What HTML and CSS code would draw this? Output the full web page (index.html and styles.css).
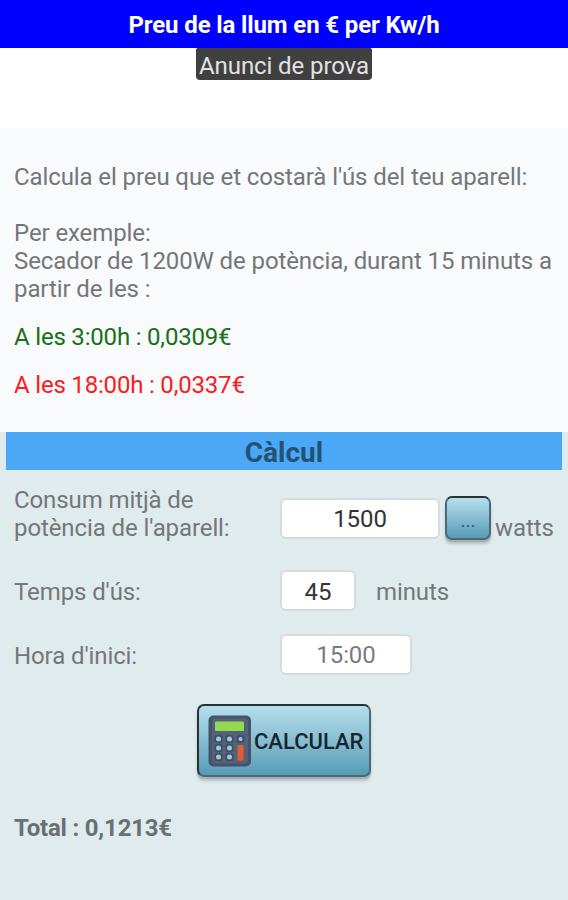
FILE: index.html
```html
<!DOCTYPE html>
<html lang="ca">
<head>
<meta charset="utf-8">
<title>Preu de la llum</title>
<link rel="stylesheet" href="styles.css">
</head>
<body>
<header class="title-bar"><h1>Preu de la llum en € per Kw/h</h1></header>
<div class="ad"><span class="ad-label">Anunci de prova</span></div>
<section class="intro">
  <p class="lead">Calcula el preu que et costarà l'ús del teu aparell:</p>
  <p class="example">Per exemple:<br>Secador de 1200W de potència, durant 15 minuts a<br>partir de les :</p>
  <p class="price cheap">A les 3:00h : 0,0309€</p>
  <p class="price dear">A les 18:00h : 0,0337€</p>
</section>
<main class="calc">
  <h2 class="calc-title">Càlcul</h2>
  <form class="form">
    <div class="row row-power">
      <label class="label" for="power">Consum mitjà de<br>potència de l'aparell:</label>
      <input class="field field-power" id="power" value="1500">
      <button class="button more" type="button">...</button>
      <span class="unit unit-watts">watts</span>
    </div>
    <div class="row row-time">
      <label class="label" for="time">Temps d'ús:</label>
      <input class="field field-time" id="time" value="45">
      <span class="unit unit-minutes">minuts</span>
    </div>
    <div class="row row-hour">
      <label class="label" for="hour">Hora d'inici:</label>
      <input class="field field-hour" id="hour" value="15:00">
    </div>
    <button class="button submit" type="button">
      <svg class="calculator" viewBox="0 0 44 54" width="44" height="54" aria-hidden="true">
        <rect x="0.500" y="1.500" width="42.500" height="51" rx="5" fill="#45546a"/>
        <rect x="4" y="4.500" width="36" height="45" rx="3" fill="#526278"/>
        <rect x="7" y="7.500" width="29" height="9.500" rx="1" fill="#94d952"/>
        <g fill="#3f4f64">
          <rect x="6.500" y="21" width="8" height="8" rx="2"/><rect x="17.500" y="21" width="8" height="8" rx="2"/><rect x="28.500" y="21" width="8" height="8" rx="2"/>
          <rect x="6.500" y="30" width="8" height="8" rx="2"/><rect x="17.500" y="30" width="8" height="8" rx="2"/>
          <rect x="6.500" y="39" width="8" height="8" rx="2"/><rect x="17.500" y="39" width="8" height="8" rx="2"/>
        </g>
        <g fill="#a3c6da">
          <circle cx="10.500" cy="25" r="2.500"/><circle cx="21.500" cy="25" r="2.500"/><circle cx="32.500" cy="25" r="2"/>
          <circle cx="10.500" cy="34" r="2.500"/><circle cx="21.500" cy="34" r="2.500"/>
          <circle cx="10.500" cy="43" r="2.500"/><circle cx="21.500" cy="43" r="2.500"/>
        </g>
        <rect x="29.500" y="31" width="6" height="15.500" rx="1" fill="#e65a31"/>
      </svg>
      <span class="submit-text">CALCULAR</span>
    </button>
  </form>
  <p class="total">Total : 0,1213€</p>
</main>
</body>
</html>
```
FILE: styles.css
```css
* { box-sizing: border-box; }
body {
  margin: 0;
  min-height: 900px;
  display: flex;
  flex-direction: column;
  background: #e0ebed;
  font: 24px/28px Roboto, sans-serif;
  letter-spacing: -0.1px;
  color: #737779;
}
h1, h2, p { margin: 0; }
.title-bar {
  height: 48px;
  padding-top: 11px;
  background: #0000ff;
  color: #fff;
  text-align: center;
}
h1 { font-size: 24px; line-height: 29px; font-weight: 700; letter-spacing: -0.13px; }
.ad {
  height: 80px;
  display: flex;
  justify-content: center;
  align-items: flex-start;
  background: #fff;
}
.ad-label {
  width: 176px;
  height: 32px;
  line-height: 36px;
  border-radius: 2px 2px 4px 4px;
  background: #404040;
  color: #e2e2e2;
  text-align: center;
  white-space: nowrap;
}
.intro {
  height: 304px;
  padding: 35px 14px 0;
  background: #f8fafc;
  white-space: nowrap;
}
.example { margin-top: 28px; }
.price { margin-top: 20px; letter-spacing: -0.19px; }
.cheap { color: #187018; }
.dear { color: #fa1a1f; }
.calc { flex: 1; padding: 0 6px; }
.calc-title {
  height: 38px;
  background: #4aa8f7;
  color: #245273;
  font-size: 28px;
  line-height: 41px;
  font-weight: 700;
  letter-spacing: 0;
  text-align: center;
}
.form { display: flex; flex-direction: column; padding-left: 8px; }
.row { display: flex; align-items: center; white-space: nowrap; }
.label { width: 266px; flex: none; }
.row-power { height: 68px; margin-top: 10px; align-items: flex-start; }
.row-power .label { padding-top: 6px; }
.row-power .field { margin-top: 18px; }
.field {
  height: 41px;
  padding: 0;
  border: 2px solid #d5dcdf;
  border-radius: 6px;
  background: #fff;
  font: inherit;
  letter-spacing: -0.1px;
  color: #333;
  text-align: center;
}
.field-power { width: 160px; }
.field-time { width: 76px; padding-top: 2px; }
.field-hour { width: 132px; color: #7b7b7b; }
.button {
  border: 2px solid #4d6876;
  border-top-color: #263238;
  border-radius: 7px;
  background: linear-gradient(#b4dfec, #8cc1d5 45%, #579bb7);
  box-shadow: 0 2px 0 #a7afb2, 0 4px 3px #b6c0c3;
  font-family: inherit;
  color: #172630;
}
.more {
  width: 46px;
  height: 44px;
  margin: 16px 4px 0 5px;
  padding: 4px 0 0;
  font-size: 19px;
  color: #315a6b;
}
.unit-watts { margin-top: 34px; }
.row-time { height: 41px; margin-top: 22px; }
.unit-minutes { margin-left: 20px; padding-top: 2px; }
.row-time .label, .row-hour .label { padding-top: 2px; }
.row-hour { height: 41px; margin-top: 23px; }
.submit {
  width: 174px;
  height: 73px;
  margin: 29px 0 0 183px;
  padding: 0 0 0 9px;
  display: flex;
  align-items: center;
  border-left-color: #263238;
}
.calculator { flex: none; }
.submit-text { margin-left: 2px; padding-top: 2px; font-size: 22px; font-weight: 500; white-space: nowrap; }
.total { margin: 37px 0 0 8px; font-weight: 700; letter-spacing: -0.2px; color: #677174; }
```
